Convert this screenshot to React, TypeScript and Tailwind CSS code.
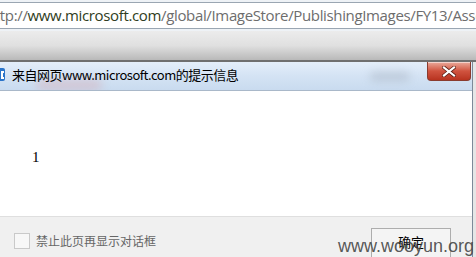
import React from "react";

const cjk = { fontFamily: '"Noto Sans CJK SC", "Noto Sans", sans-serif' };

function CloseButton() {
  return (
    <div className="flex h-[19px] w-[44px] items-center justify-center rounded-b-[4px] border border-t-0 border-[#8a3b2e] bg-gradient-to-b from-[#e9a99b] via-[#d0533f] to-[#b8331f] shadow-[inset_0_1px_0_rgba(255,255,255,0.5)]">
      <svg width="14" height="11" viewBox="0 0 14 11">
        <path
          d="M2 1.5 L12 9.5 M12 1.5 L2 9.5"
          stroke="#5a1e14"
          strokeWidth="3.6"
          strokeLinecap="square"
        />
        <path
          d="M2 1.5 L12 9.5 M12 1.5 L2 9.5"
          stroke="#ffffff"
          strokeWidth="2.2"
          strokeLinecap="square"
        />
      </svg>
    </div>
  );
}

export default function App() {
  return (
    <div className="relative h-[257px] w-[476px] overflow-hidden bg-[#e6e6e6]">
      {/* address bar */}
      <div className="bg-[#eef2f6] pt-[2px] pb-[2px]">
        <div className="flex h-[27px] items-center overflow-hidden border-y border-[#9aa6b2] bg-white">
          <span
            className="ml-[-14px] whitespace-nowrap text-[15px] tracking-[-0.35px] text-[#6d6d6d]"
            style={{ fontFamily: '"Open Sans", "Noto Sans", sans-serif' }}
          >
            http://
            <span className="text-[#2f3d22]">www.microsoft.com</span>
            /global/ImageStore/PublishingImages/FY13/Assets
          </span>
        </div>
      </div>

      {/* toolbar strip */}
      <div className="h-[31px] border-b-2 border-[#6f6f6f] bg-gradient-to-b from-[#ececec] via-[#e0e0e0] to-[#b9b9b9]" />

      {/* dialog */}
      <div className="flex w-[473px] flex-col border-r border-[#7d8a99]">
        <div className="relative flex h-[29px] items-start overflow-hidden border-b border-[#a9b8c9] bg-gradient-to-b from-[#e4eefa] via-[#d4e3f4] to-[#c9dbef]">
          <div className="absolute left-[36px] top-[18px] h-[10px] w-[66px] rounded-full bg-[#d9a0a8]/40 blur-[4px]" />
          <div className="absolute left-[370px] top-[10px] h-[9px] w-[40px] rounded-full bg-[#9aa6b4]/40 blur-[4px]" />
          <div className="relative ml-[-10px] mt-[6px] flex h-[13px] w-[15px] items-center justify-end rounded-[2px] bg-[#2a74c9] pr-[1px]">
            <div className="h-[8px] w-[3px] border-y-[2px] border-l-[2px] border-white" />
          </div>
          <span
            className="relative ml-[7px] mt-[4px] text-[13px] leading-[17px] tracking-[-0.5px] text-black"
            style={cjk}
          >
            来自网页www.microsoft.com的提示信息
          </span>
          <div className="relative ml-auto mr-[1px]">
            <CloseButton />
          </div>
        </div>

        <div className="h-[125px] bg-white pl-[32px] pt-[53px]">
          <span
            className="text-[15px] leading-[16px] text-black"
            style={{ fontFamily: '"Liberation Serif", serif' }}
          >
            1
          </span>
        </div>

        <div className="flex h-[41px] items-start border-t border-[#dfdfdf] bg-[#f0f0f0]">
          <div className="ml-[14px] mt-[16px] h-[16px] w-[16px] border border-[#c9c9c9] bg-[#f7f7f7]" />
          <span className="ml-[6px] mt-[16px] text-[12px] leading-[16px] text-[#666666]" style={cjk}>
            禁止此页再显示对话框
          </span>
          <div className="ml-auto mr-[21px] mt-[11px] flex h-[36px] w-[80px] items-start justify-center border border-[#adadad] bg-[#f4f4f4] pt-[4px]">
            <span className="text-[13px] leading-[17px] text-black" style={cjk}>
              确定
            </span>
          </div>
        </div>
      </div>

      {/* watermark */}
      <span
        className="absolute bottom-[1px] right-[2px] text-[18px] leading-[20px] text-[#444444]/90"
        style={{ fontFamily: '"Liberation Sans", Arial, sans-serif' }}
      >
        www.wooyun.org
      </span>
    </div>
  );
}
